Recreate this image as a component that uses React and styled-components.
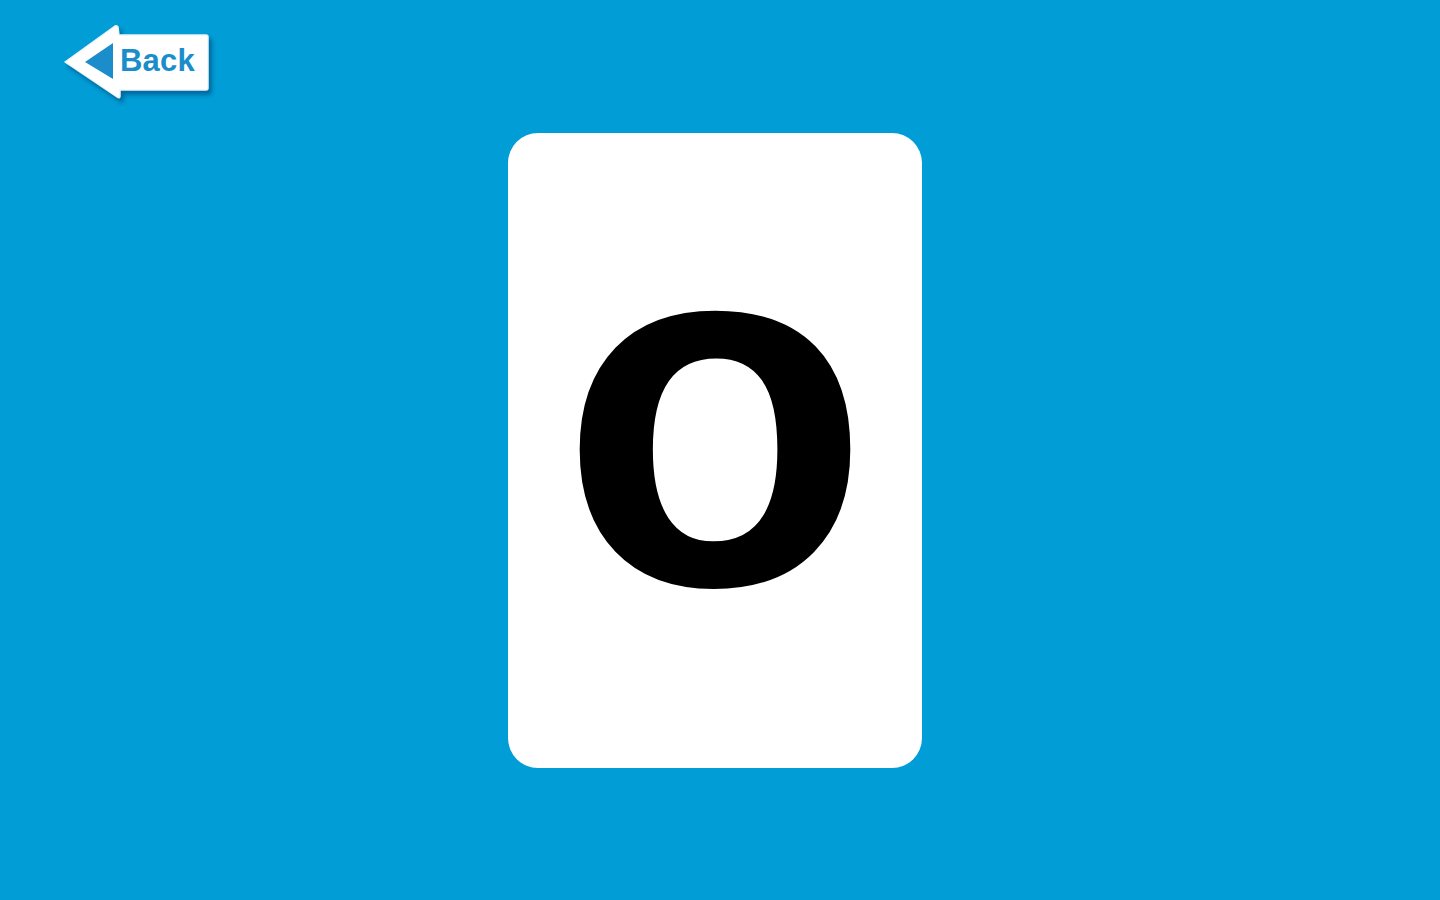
import styled, { createGlobalStyle } from "styled-components";

const GlobalStyle = createGlobalStyle`
  html, body {
    margin: 0;
    padding: 0;
    background: #019dd6;
  }
  * {
    box-sizing: border-box;
  }
`;

const Page = styled.div`
  width: 100%;
  height: 100vh;
  background: #019dd6;
  font-family: "Liberation Sans", Arial, sans-serif;
  display: flex;
  flex-direction: column;
  overflow: hidden;
`;

const TopBar = styled.div`
  display: flex;
  padding: 22px 0 0 62px;
`;

const BackButton = styled.button`
  position: relative;
  display: flex;
  align-items: flex-start;
  width: 152px;
  height: 80px;
  border: none;
  padding: 0;
  background: transparent;
  cursor: pointer;
  font-family: inherit;
  svg {
    position: absolute; /* the arrow shape sits under the label */
    left: 0;
    top: 0;
    filter: drop-shadow(3px 4px 2px rgba(0, 40, 90, 0.45));
  }
`;

const BackLabel = styled.span`
  position: relative;
  display: block;
  padding: 23px 0 0 58px;
  font-size: 31px;
  line-height: 31px;
  font-weight: 700;
  color: #1b8dca;
  letter-spacing: 0.2px;
`;

const Stage = styled.div`
  display: flex;
  justify-content: center;
  padding-right: 10px;
  margin-top: 31px;
`;

const Card = styled.div`
  width: 414px;
  height: 635px;
  background: #fff;
  border-radius: 30px;
  display: flex;
  align-items: center;
  justify-content: center;
  padding-bottom: 86px;
`;

const Letter = styled.span`
  font-family: "Liberation Sans", Arial, sans-serif;
  font-weight: 700;
  font-size: 508px;
  line-height: 508px;
  color: #000;
`;

const BackShape = () => (
  <svg width="152" height="80" viewBox="0 0 152 80">
    <path
      d="M3 40 L53 4 Q55 3 56 5 L57 13 L144 13 Q146 13 146 15 L146 66 Q146 68 144 68 L58 68 L58 74 Q58 77 55 75 Z"
      fill="#ffffff"
      stroke="#eef4f7"
      strokeWidth="1.5"
      strokeLinejoin="round"
    />
    <path d="M23 40 L51 21 L51 57 Z" fill="#1b8dca" />
  </svg>
);

export default function App() {
  return (
    <Page>
      <GlobalStyle />
      <TopBar>
        <BackButton>
          <BackShape />
          <BackLabel>Back</BackLabel>
        </BackButton>
      </TopBar>
      <Stage>
        <Card>
          <Letter>o</Letter>
        </Card>
      </Stage>
    </Page>
  );
}
